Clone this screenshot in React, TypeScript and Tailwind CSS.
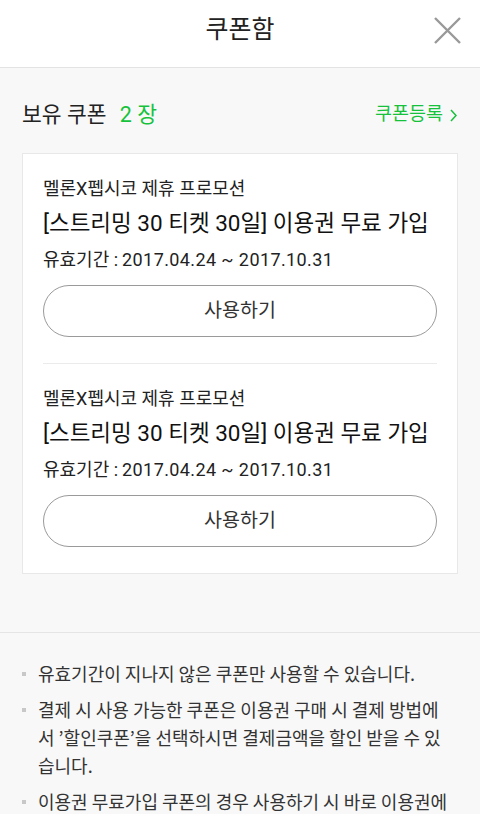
import React from 'react'

const coupons = [
  { partner: '멜론X펩시코 제휴 프로모션', title: '[스트리밍 30 티켓 30일] 이용권 무료 가입', period: '2017.04.24 ~ 2017.10.31' },
  { partner: '멜론X펩시코 제휴 프로모션', title: '[스트리밍 30 티켓 30일] 이용권 무료 가입', period: '2017.04.24 ~ 2017.10.31' },
]

const notes = [
  '유효기간이 지나지 않은 쿠폰만 사용할 수 있습니다.',
  '결제 시 사용 가능한 쿠폰은 이용권 구매 시 결제 방법에서 ’할인쿠폰’을 선택하시면 결제금액을 할인 받을 수 있습니다.',
  '이용권 무료가입 쿠폰의 경우 사용하기 시 바로 이용권에 전환됩니다.',
]

function Coupon({ item, last }: { item: (typeof coupons)[0]; last: boolean }) {
  return (
    <div className={`pt-[17px] pb-[26px] ${last ? '' : 'border-b border-[#ebebeb]'}`}>
      <div className="h-[35px] flex items-center text-[18px] text-[#222]">{item.partner}</div>
      <div className="h-[36px] flex items-center text-[22.5px] text-[#111]">{item.title}</div>
      <div className="h-[35px] flex items-center text-[18px] text-[#222]">
        유효기간 : <span className="ml-[4px] tracking-[0.4px]">{item.period}</span>
      </div>
      <button className="mt-[8px] w-full h-[52px] rounded-full border border-[#9a9a9a] bg-white text-[19.5px] text-[#333]">
        사용하기
      </button>
    </div>
  )
}

export default function App() {
  return (
    <div
      className="w-[480px] h-[814px] overflow-hidden bg-[#f8f8f8]"
      style={{ fontFamily: 'Roboto, "Noto Sans CJK KR", sans-serif' }}
    >
      <div className="h-[68px] bg-white border-b border-[#e3e3e3] flex items-center justify-center relative">
        <h1 className="text-[25px] text-[#222] -mt-[8px]">쿠폰함</h1>
        <svg className="absolute left-[434px] top-[17px]" width="27" height="27" viewBox="0 0 27 27">
          <path d="M1 1 L26 26 M26 1 L1 26" stroke="#999" strokeWidth="2.4" fill="none" />
        </svg>
      </div>

      <div className="px-[22px] pt-[32px] pb-[58px] border-b border-[#e5e5e5]">
        <div className="h-[30px] flex items-center justify-between">
          <div className="text-[21.5px] text-[#222]">
            보유 쿠폰 <span className="ml-[8px] text-[#16c23b]">2 장</span>
          </div>
          <div className="flex items-center gap-[7px] text-[18.5px] text-[#16c23b]">
            쿠폰등록
            <svg width="7" height="13" viewBox="0 0 7 13" className="mr-[1px]">
              <path d="M1 1 L6 6.5 L1 12" stroke="#16c23b" strokeWidth="1.5" fill="none" />
            </svg>
          </div>
        </div>
        <div className="mt-[23px] bg-white border border-[#e8e8e8] px-[20px]">
          {coupons.map((c, i) => (
            <Coupon key={i} item={c} last={i === coupons.length - 1} />
          ))}
        </div>
      </div>

      <ul
        className="pl-[22px] pr-[30px] pt-[26px] flex flex-col gap-[8px]"
        style={{ fontFamily: '"Noto Sans CJK KR", sans-serif' }}
      >
        {notes.map((n, i) => (
          <li key={i} className="flex text-[18px] leading-[28px] text-[#333]">
            <span className="w-[4px] h-[4px] bg-[#c8c8c8] mt-[13px] mr-[12px] shrink-0" />
            <span className="break-all">{n}</span>
          </li>
        ))}
      </ul>
    </div>
  )
}
